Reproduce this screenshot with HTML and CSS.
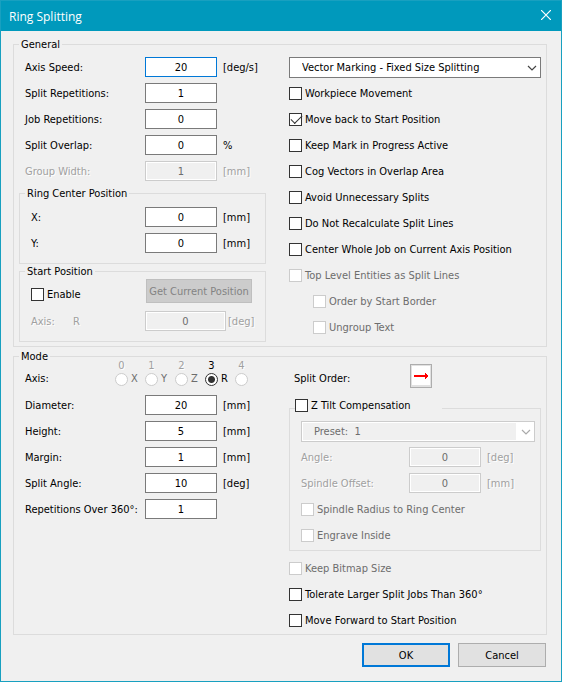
FILE: index.html
```html
<!DOCTYPE html>
<html lang="en">
<head>
    <meta charset="UTF-8">
    <meta name="viewport" content="width=device-width, initial-scale=1.0">
    <title>Ring Splitting</title>
    <link rel="stylesheet" href="styles.css">
</head>
<body>

    <form class="dialog">
        <header class="titlebar">
            <h1>Ring Splitting</h1>
            <button type="button" class="close" aria-label="Close">
                <svg width="10" height="10" viewBox="0 0 10 10"><path d="M0 0L10 10M10 0L0 10" stroke="#fff" stroke-width="1.2" fill="none"/></svg>
            </button>
        </header>

        <div class="content">
            <fieldset class="group">
                <legend>General</legend>
                <div class="columns">
                    <div class="left">
                        <div class="rows">
                            <div class="row">
                                <label for="axisSpeed">Axis Speed:</label>
                                <input type="text" id="axisSpeed" class="focused" value="20">
                                <span>[deg/s]</span>
                            </div>
                            <div class="row">
                                <label for="splitReps">Split Repetitions:</label>
                                <input type="text" id="splitReps" value="1">
                            </div>
                            <div class="row">
                                <label for="jobReps">Job Repetitions:</label>
                                <input type="text" id="jobReps" value="0">
                            </div>
                            <div class="row">
                                <label for="overlap">Split Overlap:</label>
                                <input type="text" id="overlap" value="0">
                                <span>%</span>
                            </div>
                            <div class="row off">
                                <label for="groupWidth">Group Width:</label>
                                <input type="text" id="groupWidth" value="1" disabled>
                                <span>[mm]</span>
                            </div>
                        </div>

                        <fieldset class="subgroup center-position">
                            <legend>Ring Center Position</legend>
                            <div class="rows">
                                <div class="row">
                                    <label for="centerX">X:</label>
                                    <input type="text" id="centerX" value="0">
                                    <span>[mm]</span>
                                </div>
                                <div class="row">
                                    <label for="centerY">Y:</label>
                                    <input type="text" id="centerY" value="0">
                                    <span>[mm]</span>
                                </div>
                            </div>
                        </fieldset>

                        <fieldset class="subgroup start-position">
                            <legend>Start Position</legend>
                            <div class="enable-row">
                                <label class="check"><input type="checkbox">Enable</label>
                                <button type="button" class="btn" disabled>Get Current Position</button>
                            </div>
                            <div class="row wide off">
                                <label for="startAxis">Axis:<span class="axis-name">R</span></label>
                                <input type="text" id="startAxis" value="0" disabled>
                                <span>[deg]</span>
                            </div>
                        </fieldset>
                    </div>

                    <div class="right">
                        <div class="select">
                            <select aria-label="Splitting mode">
                                <option>Vector Marking - Fixed Size Splitting</option>
                            </select>
                            <svg width="10" height="6" viewBox="0 0 10 6"><path d="M1 1L5 5L9 1" stroke="#444" stroke-width="1.2" fill="none"/></svg>
                        </div>
                        <div class="rows options">
                            <label class="check"><input type="checkbox">Workpiece Movement</label>
                            <label class="check"><input type="checkbox" checked>Move back to Start Position</label>
                            <label class="check"><input type="checkbox">Keep Mark in Progress Active</label>
                            <label class="check"><input type="checkbox">Cog Vectors in Overlap Area</label>
                            <label class="check"><input type="checkbox">Avoid Unnecessary Splits</label>
                            <label class="check"><input type="checkbox">Do Not Recalculate Split Lines</label>
                            <label class="check"><input type="checkbox">Center Whole Job on Current Axis Position</label>
                            <label class="check"><input type="checkbox" disabled>Top Level Entities as Split Lines</label>
                            <label class="check indent"><input type="checkbox" disabled>Order by Start Border</label>
                            <label class="check indent"><input type="checkbox" disabled>Ungroup Text</label>
                        </div>
                    </div>
                </div>
            </fieldset>

            <fieldset class="group mode">
                <legend>Mode</legend>
                <div class="columns">
                    <div class="left">
                        <div class="axis-row" role="radiogroup" aria-label="Axis">
                            <span class="axis-label">Axis:</span>
                            <label class="axis off"><span>0</span><input type="radio" name="axis" disabled><b>X</b></label>
                            <label class="axis off"><span>1</span><input type="radio" name="axis" disabled><b>Y</b></label>
                            <label class="axis off"><span>2</span><input type="radio" name="axis" disabled><b>Z</b></label>
                            <label class="axis"><span>3</span><input type="radio" name="axis" checked><b>R</b></label>
                            <label class="axis off"><span>4</span><input type="radio" name="axis" disabled></label>
                        </div>
                        <div class="rows">
                            <div class="row">
                                <label for="diameter">Diameter:</label>
                                <input type="text" id="diameter" value="20">
                                <span>[mm]</span>
                            </div>
                            <div class="row">
                                <label for="height">Height:</label>
                                <input type="text" id="height" value="5">
                                <span>[mm]</span>
                            </div>
                            <div class="row">
                                <label for="margin">Margin:</label>
                                <input type="text" id="margin" value="1">
                                <span>[mm]</span>
                            </div>
                            <div class="row">
                                <label for="splitAngle">Split Angle:</label>
                                <input type="text" id="splitAngle" value="10">
                                <span>[deg]</span>
                            </div>
                            <div class="row">
                                <label for="repsOver">Repetitions Over 360°:</label>
                                <input type="text" id="repsOver" value="1">
                            </div>
                        </div>
                    </div>

                    <div class="right">
                        <div class="order-row">
                            <label for="splitOrder">Split Order:</label>
                            <button type="button" id="splitOrder" class="order">
                                <svg width="14" height="6" viewBox="0 0 14 6"><path d="M0 2H11V0H12V1H13V2H14V4H13V5H12V6H11V4H0Z" fill="#f00"/></svg>
                            </button>
                        </div>

                        <fieldset class="subgroup tilt">
                            <legend><label class="check"><input type="checkbox">Z Tilt Compensation</label></legend>
                            <div class="select">
                                <select aria-label="Preset" disabled>
                                    <option>Preset:&nbsp; 1</option>
                                </select>
                                <svg width="10" height="6" viewBox="0 0 10 6"><path d="M1 1L5 5L9 1" stroke="#aaa" stroke-width="1.2" fill="none"/></svg>
                            </div>
                            <div class="rows">
                                <div class="row off">
                                    <label for="tiltAngle">Angle:</label>
                                    <input type="text" id="tiltAngle" value="0" disabled>
                                    <span>[deg]</span>
                                </div>
                                <div class="row off">
                                    <label for="spindle">Spindle Offset:</label>
                                    <input type="text" id="spindle" value="0" disabled>
                                    <span>[mm]</span>
                                </div>
                                <label class="check"><input type="checkbox" disabled>Spindle Radius to Ring Center</label>
                                <label class="check"><input type="checkbox" disabled>Engrave Inside</label>
                            </div>
                        </fieldset>

                        <div class="rows extra">
                            <label class="check"><input type="checkbox" disabled>Keep Bitmap Size</label>
                            <label class="check"><input type="checkbox">Tolerate Larger Split Jobs Than 360°</label>
                            <label class="check"><input type="checkbox">Move Forward to Start Position</label>
                        </div>
                    </div>
                </div>
            </fieldset>

            <div class="buttons">
                <button type="button" class="btn default">OK</button>
                <button type="button" class="btn">Cancel</button>
            </div>
        </div>
    </form>

</body>
</html>
```
FILE: styles.css
```css
* {
    box-sizing: border-box;
}
body {
    margin: 0;
    background-color: #f0f0f0;
    color: #000;
}
body, input, select, button {
    font-family: "DejaVu Sans Condensed", Tahoma, sans-serif;
    font-size: 11px;
}
.dialog {
    min-height: 100vh;
    border: 1px solid #18a0c0;
}

/* title bar */
.titlebar {
    display: flex;
    align-items: center;
    justify-content: space-between;
    height: 30px;
    padding: 0 10px 0 8px;
    background-color: #0099bc;
    color: #fff;
}
.titlebar h1 {
    margin: 0;
    font-family: "Open Sans", "Segoe UI", sans-serif;
    font-size: 12px;
    font-weight: normal;
}
.close {
    display: flex;
    padding: 0 0 2px;
    border: none;
    background: none;
}

.content {
    padding: 6px 14px 14px 12px;
}

/* groups */
fieldset {
    min-width: 0;
    margin: 0;
    border: 1px solid #dcdcdc;
}
legend {
    height: 15px;
    padding: 0 2px;
    line-height: 15px;
}
.group {
    padding: 5px 5px 4px;
}
.mode {
    margin-top: 2px;
    padding-top: 0;
}
.mode > .columns {
    margin-top: -4px;
}
.columns {
    display: grid;
    grid-template-columns: 247px 1fr;
    gap: 23px;
}
.subgroup {
    padding: 6px 5px 10px 11px;
}
.subgroup > legend {
    margin-left: -6px;
}
.center-position {
    margin-top: 5px;
}
.start-position {
    padding-top: 0;
}

/* rows */
.rows {
    display: grid;
    gap: 6px;
}
.row {
    display: grid;
    grid-template-columns: 120px 72px 1fr;
    align-items: center;
    height: 20px;
    padding-left: 6px;
}
.row > span {
    padding-left: 6px;
}
.subgroup .row {
    grid-template-columns: 114px 72px 1fr;
    padding-left: 0;
}
.subgroup .row.wide {
    grid-template-columns: 114px 81px 1fr;
    margin-top: 8px;
}
.row.wide > span {
    padding-left: 2px;
}
.tilt .row {
    grid-template-columns: 108px 72px 1fr;
}
.off {
    color: #a0a0a0;
    text-shadow: 1px 1px #fff;
}
.axis-name {
    margin-left: 18px;
}
input[type="text"] {
    width: 100%;
    height: 20px;
    padding: 0 2px;
    border: 1px solid #7a7a7a;
    background-color: #fff;
    color: #000;
    text-align: center;
}
input[type="text"].focused {
    border-color: #0078d7;
}
input[type="text"]:disabled {
    border-color: #ccc;
    background-color: #f0f0f0;
    box-shadow: inset 0 0 0 1px #fff;
    color: #6d6d6d;
    text-shadow: none;
}

/* drop-downs */
.select {
    position: relative;
}
.select select {
    display: block;
    width: 100%;
    height: 21px;
    padding: 0 20px 0 12px;
    border: 1px solid #7a7a7a;
    border-radius: 0;
    background-color: #fff;
    color: #000;
    appearance: none;
}
.select select:disabled {
    border-color: #ccc;
    background: #fff linear-gradient(#f0f0f0, #f0f0f0) 1px 1px / calc(100% - 19px) calc(100% - 2px) no-repeat;
    color: #6d6d6d;
    opacity: 1;
}
.select svg {
    position: absolute;
    top: 8px;
    right: 4px;
    pointer-events: none;
}
.options {
    margin-top: 5px;
}

/* check boxes */
.check {
    display: flex;
    align-items: center;
    gap: 3px;
    height: 20px;
}
.check:has(input:disabled) {
    color: #6d6d6d;
}
.indent {
    padding-left: 24px;
}
input[type="checkbox"] {
    flex: none;
    width: 13px;
    height: 13px;
    margin: 0;
    border: 1px solid #333;
    background-color: #fff;
    appearance: none;
}
input[type="checkbox"]:disabled {
    border-color: #ccc;
}
input[type="checkbox"]:checked::before {
    content: "";
    display: block;
    width: 10px;
    height: 5px;
    margin: 1px 0 0 1px;
    border: solid #333;
    border-width: 0 0 1px 1px;
    transform: rotate(-45deg);
}
.enable-row {
    display: grid;
    grid-template-columns: 115px 106px;
}
.enable-row .check {
    align-self: end;
    height: 17px;
}

/* axis selection */
.axis-row {
    display: flex;
    align-items: flex-end;
    margin-bottom: 8px;
    padding-left: 6px;
    line-height: 16px;
}
.axis-label {
    width: 90px;
}
.axis {
    display: grid;
    grid-template-columns: 13px 1fr;
    grid-template-rows: 11px 16px;
    align-items: center;
    column-gap: 3px;
    width: 30px;
}
.axis span {
    grid-column: 1 / 3;
    width: 13px;
    line-height: 11px;
    text-align: center;
}
.axis b {
    font-size: 11px;
    font-weight: normal;
}
.axis.off b {
    color: #6d6d6d;
    text-shadow: none;
}
input[type="radio"] {
    width: 13px;
    height: 13px;
    margin: 0;
    border: 1px solid #333;
    border-radius: 50%;
    background-color: #fff;
    appearance: none;
}
input[type="radio"]:checked {
    background: radial-gradient(circle, #333 3px, #fff 4px);
}
input[type="radio"]:disabled {
    border-color: #ccc;
}

/* split order */
.order-row {
    display: flex;
    align-items: flex-end;
    padding: 4px 0 0 5px;
}
.order-row label {
    width: 116px;
    line-height: 18px;
}
.order {
    display: flex;
    align-items: center;
    justify-content: center;
    width: 22px;
    height: 24px;
    padding: 0;
    border: 1px solid #adadad;
    background-color: #fff;
    box-shadow: inset 0 0 0 1px #e1e1e1, inset 0 -2px #e1e1e1;
}

/* tilt compensation */
.tilt {
    margin-top: 9px;
    padding-top: 1px;
    padding-bottom: 5px;
}
.tilt > legend {
    width: 147px;
    height: 23px;
    padding: 0 0 7px;
}
.tilt > legend .check {
    height: 16px;
}
.tilt .rows {
    margin-top: 5px;
}
.extra {
    margin-top: 7px;
}

/* buttons */
.buttons {
    display: flex;
    justify-content: flex-end;
    gap: 8px;
    margin-top: 8px;
    padding-right: 1px;
}
.btn {
    height: 24px;
    padding: 0;
    border: 1px solid #adadad;
    background-color: #e1e1e1;
    color: #000;
}
.btn:disabled {
    border-color: #bfbfbf;
    background-color: #ccc;
    color: #838383;
}
.btn.default {
    border: 2px solid #0078d7;
}
.buttons .btn {
    width: 88px;
}
```
